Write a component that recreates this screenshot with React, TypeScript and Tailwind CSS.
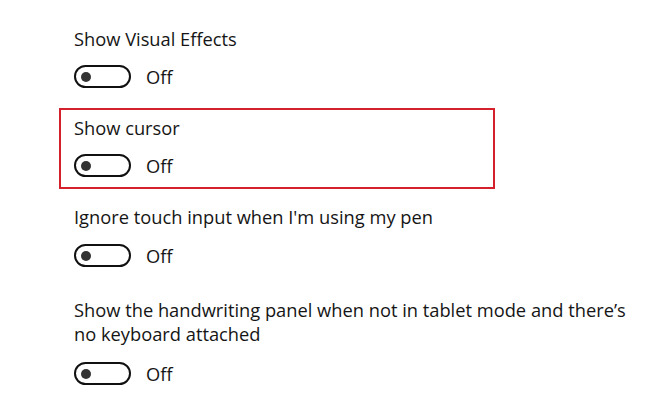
import React from "react";

function Toggle() {
  return (
    <div className="flex items-center">
      <div className="relative h-[23px] w-[57px] rounded-full border-2 border-[#111]">
        <div className="absolute left-[5px] top-1/2 h-[10px] w-[10px] -translate-y-1/2 rounded-full bg-[#333]" />
      </div>
      <span className="ml-[15px] leading-[23px]">Off</span>
    </div>
  );
}

export default function App() {
  return (
    <div
      className="h-[417px] w-[650px] overflow-hidden bg-white text-[18.3px] leading-[24px] text-[#151515]"
      style={{ fontFamily: '"Open Sans", "Noto Sans", sans-serif' }}
    >
      <div className="flex flex-col pl-[74px] pt-[27px]">
        <div className="flex flex-col">
          <div className="whitespace-nowrap">Show Visual Effects</div>
          <div className="mt-[14px]">
            <Toggle />
          </div>
        </div>

        <div className="ml-[-15px] mt-[20px] flex w-[436px] flex-col border-2 border-[#d5202d] pb-[10px] pl-[13px] pt-[6px]">
          <div className="whitespace-nowrap">Show cursor</div>
          <div className="mt-[14px]">
            <Toggle />
          </div>
        </div>

        <div className="mt-[16px] flex flex-col">
          <div className="whitespace-nowrap">Ignore touch input when I'm using my pen</div>
          <div className="mt-[15px]">
            <Toggle />
          </div>
        </div>

        <div className="mt-[31px] flex flex-col">
          <div className="whitespace-nowrap">
            Show the handwriting panel when not in tablet mode and there’s
            <br />
            no keyboard attached
          </div>
          <div className="mt-[16px]">
            <Toggle />
          </div>
        </div>
      </div>
    </div>
  );
}
